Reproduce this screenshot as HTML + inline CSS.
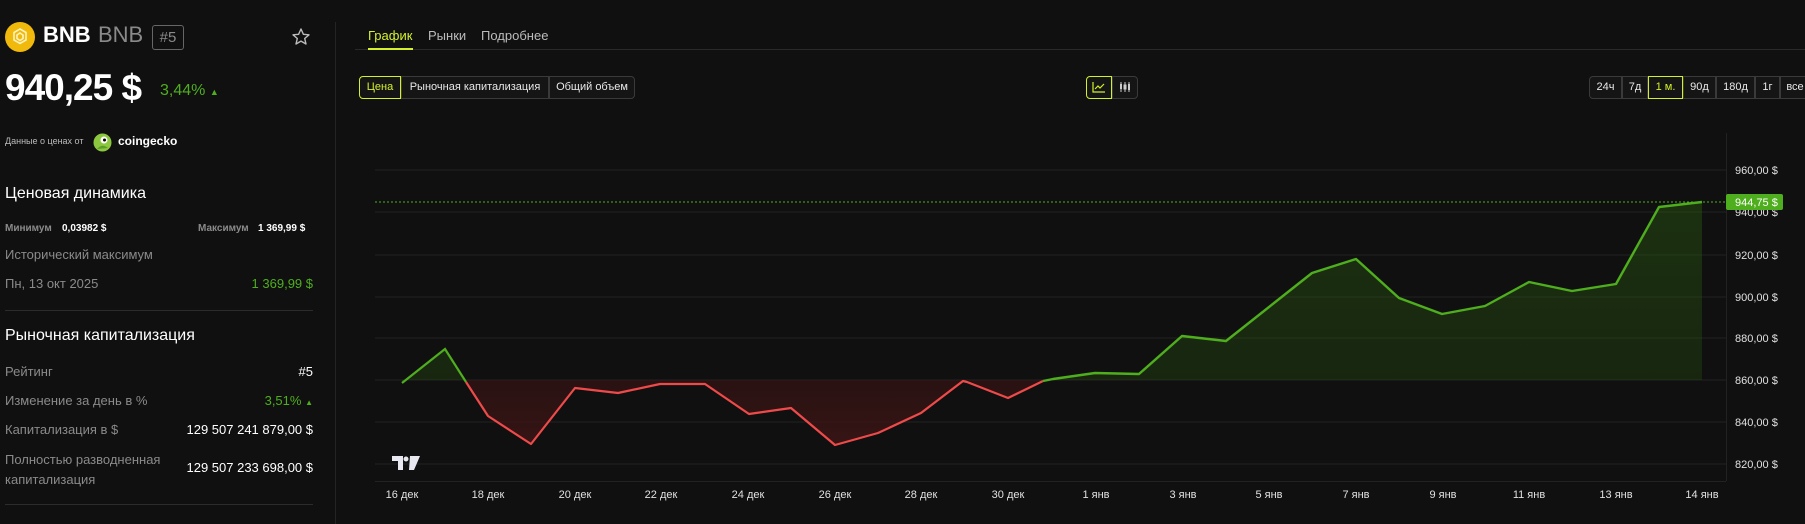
<!DOCTYPE html>
<html><head><meta charset="utf-8"><style>
*{margin:0;padding:0;box-sizing:border-box}
body{width:1805px;height:524px;background:#101010;color:#fff;font-family:"Liberation Sans","Noto Sans CJK SC",sans-serif;overflow:hidden;position:relative}
.a{position:absolute;white-space:nowrap}
.g{color:#8a8a8a}.gr{color:#4fae1e}
.btn{position:absolute;top:76px;height:23px;border:1px solid #3a3a3a;background:#151515;font-size:11px;line-height:21px;text-align:center;color:#e8e8e8}
.on{border-color:#d4f02a;color:#d4f02a}
.ax{font-size:11px;fill:#e0e0e0;font-family:"Liberation Sans",sans-serif}
</style></head><body>
<svg class="a" style="left:5px;top:22px" width="30" height="30"><circle cx="15" cy="15" r="15" fill="#f0b90b"/><g fill="none" stroke="#fff3c0" stroke-width="1.6"><path d="M15 7 L21 10.5 L21 18 L15 21.5 L9 18 L9 10.5 Z"/><path d="M15 11 L18 13 L18 16.5 L15 18.5 L12 16.5 L12 13 Z"/></g></svg>
<div class="a" style="left:43px;top:22px;font-size:22px;font-weight:bold">BNB</div>
<div class="a g" style="left:98px;top:22px;font-size:22px">BNB</div>
<div class="a g" style="left:152px;top:25px;width:32px;height:25px;border:1px solid #666;border-radius:3px;font-size:15px;text-align:center;line-height:23px">#5</div>
<svg class="a" style="left:291px;top:27px" width="20" height="20"><path d="M10 2 L12.4 7.3 L18 7.8 L13.7 11.5 L15 17 L10 14.1 L5 17 L6.3 11.5 L2 7.8 L7.6 7.3 Z" fill="none" stroke="#bbb" stroke-width="1.4" stroke-linejoin="round"/></svg>
<div class="a" style="left:5px;top:67px;font-size:37px;font-weight:bold;letter-spacing:-1px">940,25 $</div>
<div class="a gr" style="left:160px;top:82px;font-size:16px">3,44% <span style="font-size:9px">▲</span></div>
<div class="a" style="left:5px;top:136px;font-size:9px;color:#bbb">Данные о ценах от</div>
<svg class="a" style="left:93px;top:133px" width="19" height="19"><circle cx="9.5" cy="9.5" r="9" fill="#8dc63f"/><circle cx="11" cy="7" r="3.5" fill="#fff"/><circle cx="11.5" cy="7" r="1.5" fill="#000"/><path d="M4 16 Q9 10 15 15" fill="#5a9e2a"/></svg>
<div class="a" style="left:118px;top:134px;font-size:12px;font-weight:bold">coingecko</div>
<div class="a" style="left:5px;top:185px;font-size:16px">Ценовая динамика</div>
<div class="a g" style="left:5px;top:223px;font-size:10px;font-weight:bold">Минимум</div>
<div class="a" style="left:62px;top:223px;font-size:10px;font-weight:bold">0,03982 $</div>
<div class="a g" style="left:198px;top:223px;font-size:10px;font-weight:bold">Максимум</div>
<div class="a" style="left:258px;top:223px;font-size:10px;font-weight:bold">1 369,99 $</div>
<div class="a g" style="left:5px;top:247px;font-size:13px">Исторический максимум</div>
<div class="a g" style="left:5px;top:276px;font-size:13px">Пн, 13 окт 2025</div>
<div class="a gr" style="right:1492px;top:276px;font-size:13px">1 369,99 $</div>
<div class="a" style="left:5px;top:310px;width:308px;height:1px;background:#2c2c2c"></div>
<div class="a" style="left:5px;top:327px;font-size:16px">Рыночная капитализация</div>
<div class="a g" style="left:5px;top:364px;font-size:13px">Рейтинг</div>
<div class="a" style="right:1492px;top:364px;font-size:13px">#5</div>
<div class="a g" style="left:5px;top:393px;font-size:13px">Изменение за день в %</div>
<div class="a gr" style="right:1492px;top:393px;font-size:13px">3,51% <span style="font-size:8px">▲</span></div>
<div class="a g" style="left:5px;top:422px;font-size:13px">Капитализация в $</div>
<div class="a" style="right:1492px;top:422px;font-size:13px">129 507 241 879,00 $</div>
<div class="a g" style="left:5px;top:450px;font-size:13px;line-height:20px;white-space:normal;width:160px">Полностью разводненная капитализация</div>
<div class="a" style="right:1492px;top:460px;font-size:13px">129 507 233 698,00 $</div>
<div class="a" style="left:5px;top:504px;width:308px;height:1px;background:#2c2c2c"></div>
<div class="a" style="left:335px;top:22px;width:1px;height:502px;background:#242424"></div>
<div class="a" style="left:368px;top:28px;font-size:13px;color:#d4f02a">График</div>
<div class="a" style="left:428px;top:28px;font-size:13px;color:#bbb">Рынки</div>
<div class="a" style="left:481px;top:28px;font-size:13px;color:#bbb">Подробнее</div>
<div class="a" style="left:355px;top:49px;width:1450px;height:1px;background:#2a2a2a"></div>
<div class="a" style="left:368px;top:48px;width:45px;height:2px;background:#d4f02a"></div>
<div class="btn on" style="left:359px;width:42px;border-radius:4px 0 0 4px">Цена</div>
<div class="btn" style="left:401px;width:148px">Рыночная капитализация</div>
<div class="btn" style="left:549px;width:86px;border-radius:0 4px 4px 0">Общий объем</div>
<div class="btn on" style="left:1086px;width:26px;border-radius:4px 0 0 4px"><svg width="14" height="12" style="margin-top:4px"><path d="M1 1 V11 H13 M3 8 L6 5 L8 7 L12 3" fill="none" stroke="#d4f02a" stroke-width="1.2"/></svg></div>
<div class="btn" style="left:1112px;width:26px;border-radius:0 4px 4px 0"><svg width="14" height="12" style="margin-top:4px"><path d="M3 1V11 M7 1V11 M11 1V11" stroke="#ccc" stroke-width="1"/><rect x="2" y="3" width="2" height="5" fill="#ccc"/><rect x="6" y="4" width="2" height="4" fill="none" stroke="#ccc"/><rect x="10" y="3" width="2" height="6" fill="#ccc"/></svg></div>
<div class="btn" style="left:1589px;width:33px;border-radius:4px 0 0 4px">24ч</div>
<div class="btn" style="left:1622px;width:26px">7д</div>
<div class="btn on" style="left:1648px;width:35px">1 м.</div>
<div class="btn" style="left:1683px;width:33px">90д</div>
<div class="btn" style="left:1716px;width:39px">180д</div>
<div class="btn" style="left:1755px;width:25px">1г</div>
<div class="btn" style="left:1780px;width:30px">все</div>
<svg class="a" style="left:0;top:0" width="1805" height="524">
<defs>
<linearGradient id="gg" x1="0" y1="200" x2="0" y2="380" gradientUnits="userSpaceOnUse"><stop offset="0" stop-color="#2a5a10" stop-opacity=".45"/><stop offset="1" stop-color="#2a5a10" stop-opacity=".3"/></linearGradient>
<linearGradient id="rg" x1="0" y1="380" x2="0" y2="445" gradientUnits="userSpaceOnUse"><stop offset="0" stop-color="#3a1414" stop-opacity=".6"/><stop offset="1" stop-color="#3a1414" stop-opacity=".9"/></linearGradient>
</defs>
<g stroke="#222" stroke-width="1">
<path d="M375 170H1726M375 212H1726M375 255H1726M375 297H1726M375 338H1726M375 380H1726M375 422H1726M375 464H1726"/>
<path d="M375 481.5H1726M1726.5 133V481"/>
</g>
<path d="M402 380 L402 383 L445 349 L466 380 Z" fill="url(#gg)"/>
<path d="M466 380 L488 416 L531 444 L575 388 L618 393 L660 384 L705 384 L749 414 L791 408 L835 445 L878 433 L921 413 L963 380 L967 380 L1008 398 L1044 380 Z" fill="url(#rg)"/>
<path d="M1044 380 L1053 379 L1095 373 L1139 374 L1182 336 L1226 341 L1312 273 L1356 259 L1399 298 L1442 314 L1485 306 L1529 282 L1572 291 L1616 284 L1659 207 L1702 202 L1702 380 Z" fill="url(#gg)"/>
<path d="M375 202H1726" stroke="#4fae1e" stroke-width="1" stroke-dasharray="2 2"/>
<path d="M402 383 L445 349 L466 382" fill="none" stroke="#4fae1e" stroke-width="2.2"/>
<path d="M466 382 L488 416 L531 444 L575 388 L618 393 L660 384 L705 384 L749 414 L791 408 L835 445 L878 433 L921 413 L963 381 L967 382 L1008 398 L1043 381" fill="none" stroke="#ef4a4a" stroke-width="2.2" stroke-linejoin="round"/>
<path d="M1043 381 L1053 379 L1095 373 L1139 374 L1182 336 L1226 341 L1312 273 L1356 259 L1399 298 L1442 314 L1485 306 L1529 282 L1572 291 L1616 284 L1659 207 L1702 202" fill="none" stroke="#4fae1e" stroke-width="2.4" stroke-linejoin="round"/>
<path d="M392 456h11v14h-5v-9h-6z M410 456h10l-6 14h-5z" fill="#e8e8f0"/><circle cx="406" cy="459" r="2.5" fill="#e8e8f0"/>
<g class="ax">
<text x="1735" y="174">960,00 $</text><text x="1735" y="216">940,00 $</text><text x="1735" y="259">920,00 $</text><text x="1735" y="301">900,00 $</text><text x="1735" y="342">880,00 $</text><text x="1735" y="384">860,00 $</text><text x="1735" y="426">840,00 $</text><text x="1735" y="468">820,00 $</text>
</g>
<rect x="1726" y="194" width="57" height="16" rx="2" fill="#4fae1e"/>
<text x="1735" y="206" class="ax" style="fill:#fff">944,75 $</text>
<g class="ax" text-anchor="middle" style="font-size:11px">
<text x="402" y="498">16 дек</text><text x="488" y="498">18 дек</text><text x="575" y="498">20 дек</text><text x="661" y="498">22 дек</text><text x="748" y="498">24 дек</text><text x="835" y="498">26 дек</text><text x="921" y="498">28 дек</text><text x="1008" y="498">30 дек</text><text x="1096" y="498">1 янв</text><text x="1183" y="498">3 янв</text><text x="1269" y="498">5 янв</text><text x="1356" y="498">7 янв</text><text x="1443" y="498">9 янв</text><text x="1529" y="498">11 янв</text><text x="1616" y="498">13 янв</text><text x="1702" y="498">14 янв</text>
</g>
</svg>
</body></html>
